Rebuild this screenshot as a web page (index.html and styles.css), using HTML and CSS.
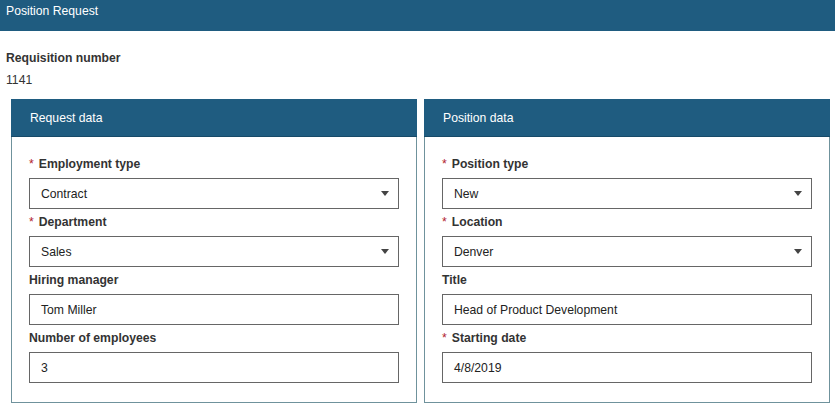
FILE: index.html
```html
<!DOCTYPE html>
<html>
<head>
<meta charset="utf-8">
<link rel="stylesheet" href="styles.css">
</head>
<body>
<div class="topbar">Position Request</div>
<div class="req">
  <div class="req-label">Requisition number</div>
  <div class="req-value">1141</div>
</div>
<div class="panels">
  <section class="panel">
    <div class="panel-head">Request data</div>
    <div class="panel-body">
      <div class="field">
        <div class="label"><span class="star">*</span>Employment type</div>
        <div class="box select"><span>Contract</span><span class="caret"></span></div>
      </div>
      <div class="field">
        <div class="label"><span class="star">*</span>Department</div>
        <div class="box select"><span>Sales</span><span class="caret"></span></div>
      </div>
      <div class="field">
        <div class="label">Hiring manager</div>
        <div class="box"><span>Tom Miller</span></div>
      </div>
      <div class="field">
        <div class="label">Number of employees</div>
        <div class="box"><span>3</span></div>
      </div>
    </div>
  </section>
  <section class="panel">
    <div class="panel-head">Position data</div>
    <div class="panel-body">
      <div class="field">
        <div class="label"><span class="star">*</span>Position type</div>
        <div class="box select"><span>New</span><span class="caret"></span></div>
      </div>
      <div class="field">
        <div class="label"><span class="star">*</span>Location</div>
        <div class="box select"><span>Denver</span><span class="caret"></span></div>
      </div>
      <div class="field">
        <div class="label">Title</div>
        <div class="box"><span>Head of Product Development</span></div>
      </div>
      <div class="field">
        <div class="label"><span class="star">*</span>Starting date</div>
        <div class="box"><span>4/8/2019</span></div>
      </div>
    </div>
  </section>
</div>
</body>
</html>
```

FILE: styles.css
```css
* { box-sizing: border-box; }
html, body { margin: 0; padding: 0; background: #fff; }
body {
  font-family: "Liberation Sans", Arial, sans-serif;
  font-size: 12.2px;
  color: #222;
  width: 835px;
  height: 412px;
  overflow: hidden;
}
.topbar {
  height: 31px;
  background: #1f5c80;
  color: #fff;
  padding: 4px 6px 0;
  line-height: 15px;
}
.req {
  padding: 19px 6px 0;
}
.req-label {
  font-weight: bold;
  color: #333;
  line-height: 16px;
}
.req-value {
  margin-top: 6px;
  line-height: 16px;
  color: #333;
}
.panels {
  display: flex;
  gap: 7px;
  padding: 11px 5px 0 11px;
}
.panel {
  width: 407px;
  height: 304px;
  border: 1px solid #6f929c;
  border-top: none;
  display: flex;
  flex-direction: column;
}
.panel-head {
  height: 38px;
  background: #1f5c80;
  color: #fff;
  margin: 0 -1px;
  padding-left: 19px;
  line-height: 38px;
  border-bottom: 1px solid #174a68;
}
.panel-body {
  padding: 19px 17px 0 17px;
  display: flex;
  flex-direction: column;
  gap: 6px;
}
.field {
  display: flex;
  flex-direction: column;
  gap: 6px;
}
.label {
  font-weight: bold;
  color: #333;
  line-height: 16px;
}
.star {
  color: #b2232f;
  font-weight: normal;
  margin-right: 5px;
}
.box {
  height: 31px;
  border: 1px solid #666;
  display: flex;
  align-items: center;
  justify-content: space-between;
  padding: 0 9px 0 11px;
  color: #222;
  background: #fff;
}
.field + .field .label { margin-top: -1px; }
.caret {
  width: 0;
  height: 0;
  border-left: 4px solid transparent;
  border-right: 4px solid transparent;
  border-top: 5px solid #444;
}
```
